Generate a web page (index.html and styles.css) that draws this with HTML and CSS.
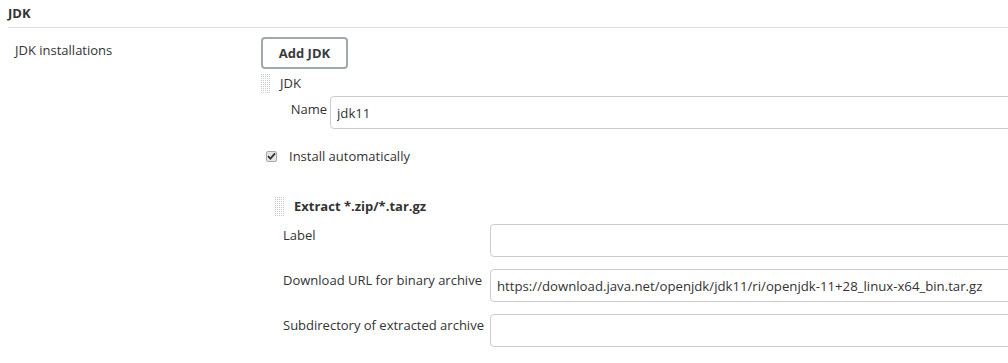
FILE: index.html
```html
<!DOCTYPE html>
<html lang="en">
<head>
  <meta charset="UTF-8" />
  <title>JDK</title>
  <link rel="stylesheet" href="styles.css">
</head>
<body>

  <!-- Section title -->
  <div class="section-header">JDK</div>

  <div class="setting">
    <div class="setting-name">JDK installations</div>
    <div class="setting-main">
      <button class="add-btn">Add JDK</button>

      <!-- one JDK installation -->
      <div class="repeated">
        <div class="chunk-title"><span class="grip"></span>JDK</div>
        <div class="name-row">
          <label class="name-label">Name</label>
          <input class="text-box" type="text" value="jdk11">
        </div>
        <div class="optional-block">
          <span class="fake-check">
            <svg width="9" height="8" viewBox="0 0 9 8"><path d="M1 4.2 L3.4 6.6 L8 1.4" fill="none" stroke="#333" stroke-width="1.8"/></svg>
          </span>
          Install automatically
        </div>

        <!-- installer -->
        <div class="installer">
          <div class="chunk-title bold"><span class="grip"></span>Extract *.zip/*.tar.gz</div>
          <div class="form-grid">
            <label>Label</label>
            <input class="text-box" type="text" value="">
            <label>Download URL for binary archive</label>
            <input class="text-box" type="text" value="https://download.java.net/openjdk/jdk11/ri/openjdk-11+28_linux-x64_bin.tar.gz">
            <label>Subdirectory of extracted archive</label>
            <input class="text-box" type="text" value="">
          </div>
        </div>
      </div>
    </div>
  </div>

</body>
</html>
```

FILE: styles.css
```css
body {
  margin: 0;
  font-family: 'Open Sans', 'Noto Sans', sans-serif;
  font-size: 13px;
  color: #333;
  background: #fff;
  overflow: hidden;
  width: 1008px;
  height: 363px;
}

/* Section header */
.section-header {
  margin: 0 0 0 8px;
  padding: 5px 0 5px;
  font-weight: bold;
  font-size: 13px;
  line-height: 17px;
  border-bottom: 1px solid #ddd;
}

.setting {
  display: flex;
  padding-top: 9px;
}
.setting-name {
  width: 246px;
  padding: 3px 0 0 15px;
  line-height: 20px;
}
.setting-main {
  flex: 1;
  min-width: 0;
}

.add-btn {
  display: block;
  width: 87px;
  height: 32px;
  font-family: inherit;
  font-size: 13px;
  font-weight: bold;
  color: #3a3a3a;
  background: #fff;
  border: 2px solid #a1a8ae;
  border-radius: 4px;
  padding: 0;
}

.repeated {
  margin-top: 4px;
}

.chunk-title {
  display: flex;
  align-items: center;
  height: 20px;
  line-height: 20px;
}
.chunk-title.bold {
  font-weight: bold;
}

/* drag handle dots */
.grip {
  display: inline-block;
  flex: none;
  width: 10px;
  height: 19px;
  margin-right: 9px;
  background-image:
    linear-gradient(90deg, transparent 50%, #fff 50%),
    linear-gradient(#c8c8c8 50%, transparent 50%);
  background-size: 2px 2px;
}

.text-box {
  box-sizing: border-box;
  height: 33px;
  padding: 0 6px;
  font-family: inherit;
  font-size: 13.2px;
  color: #333;
  border: 1px solid #ccc;
  border-radius: 4px;
  outline: none;
  width: 100%;
}

.name-row {
  display: flex;
  margin: 3px 0 0 18px;
}
.name-label {
  width: 48px;
  margin-right: 3px;
  text-align: right;
  padding-top: 3px;
  line-height: 20px;
}
.name-row .text-box {
  flex: 1;
  margin-right: -20px;
}

.optional-block {
  display: flex;
  align-items: center;
  margin: 17px 0 0 5px;
  line-height: 20px;
}
.fake-check {
  display: inline-flex;
  align-items: center;
  justify-content: center;
  box-sizing: border-box;
  width: 11px;
  height: 11px;
  margin-right: 12px;
  border: 1px solid #a8a8a8;
  border-radius: 2px;
  background: #e6e6e6;
}

.installer {
  margin: 30px 0 0 14px;
}

.form-grid {
  display: grid;
  grid-template-columns: 207px 1fr;
  row-gap: 12px;
  margin: 8px -30px 0 8px;
}
.form-grid label {
  padding-top: 1px;
  line-height: 20px;
  white-space: nowrap;
}
```
